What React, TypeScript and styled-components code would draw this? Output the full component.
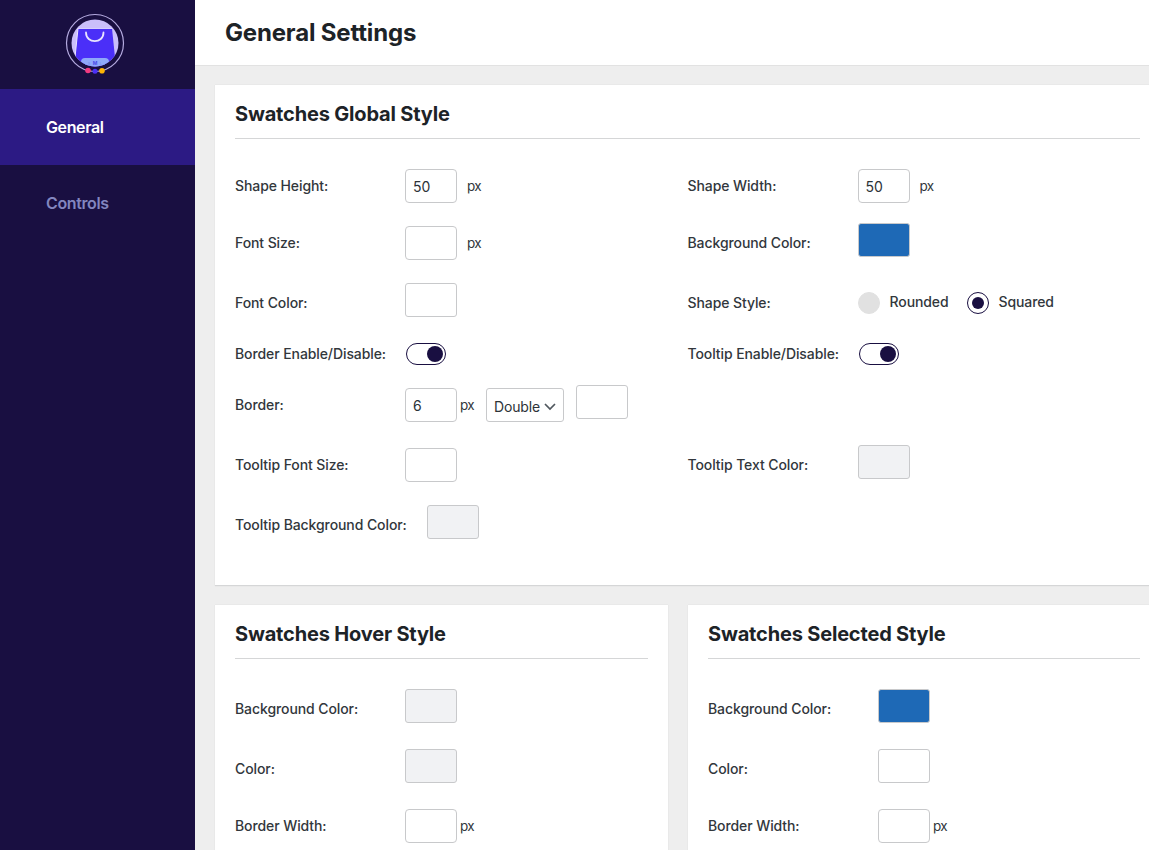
import React from "react";
import styled, { createGlobalStyle } from "styled-components";

const GlobalStyle = createGlobalStyle`
  * { box-sizing: border-box; }
  body {
    margin: 0;
    overflow: hidden;
    background: #eeeeee;
    color: #32373c;
    font-family: Inter, "Liberation Sans", sans-serif;
    font-size: 14px;
  }
`;

const Page = styled.div`
  display: flex;
  height: 850px;
  overflow: hidden;
`;

const Sidebar = styled.nav`
  flex: 0 0 195px;
  background: #190f41;
`;

const Brand = styled.div`
  height: 89px;
  padding: 12px 0 0 64px;
`;

const NavItem = styled.a<{ $active?: boolean }>`
  display: flex;
  align-items: center;
  height: 76px;
  padding-left: 46px;
  font-size: 16px;
  font-weight: 600;
  letter-spacing: -0.37px;
  color: ${(p) => (p.$active ? "#ffffff" : "#8286bf")};
  background: ${(p) => (p.$active ? "#2c1a84" : "transparent")};
`;

const Main = styled.main`
  flex: 1;
  min-width: 0;
`;

const TopBar = styled.header`
  display: flex;
  align-items: center;
  height: 66px;
  padding-left: 30px;
  background: #ffffff;
  border-bottom: 1px solid #e2e2e2;
`;

const PageTitle = styled.h1`
  margin: 0;
  font-size: 24px;
  font-weight: 700;
  letter-spacing: -0.17px;
  color: #1d2327;
`;

const Content = styled.div`
  display: flex;
  flex-direction: column;
  gap: 19px;
  width: 965px;
  padding: 19px 0 0 20px;
`;

const Card = styled.section<{ $height: number }>`
  height: ${(p) => p.$height}px;
  padding: 0 20px;
  background: #ffffff;
  box-shadow: 0 0 1px rgba(0, 0, 0, 0.12);
  border-bottom: 1px solid #d5d6d7;
`;

const CardPair = styled.div`
  display: grid;
  grid-template-columns: 453px 472px;
  column-gap: 20px;
`;

const CardTitle = styled.h2`
  display: flex;
  align-items: center;
  height: 54px;
  margin: 0;
  padding-top: 4px;
  border-bottom: 1px solid #d5d6d7;
  font-size: 20px;
  font-weight: 700;
  letter-spacing: -0.18px;
  color: #1d2327;
`;

const Fields = styled.div<{ $columns: string; $rows: string; $top: number }>`
  display: grid;
  grid-template-columns: ${(p) => p.$columns};
  grid-template-rows: ${(p) => p.$rows};
  padding-top: ${(p) => p.$top}px;
`;

const Field = styled.div<{ $column?: number }>`
  display: flex;
  align-items: center;
  height: 34px;
  grid-column: ${(p) => p.$column ?? 1};
`;

const Label = styled.label<{ $wide?: boolean }>`
  flex: 0 0 ${(p) => (p.$wide ? 192 : 170)}px;
  padding-bottom: 2px;
  font-weight: 500;
  letter-spacing: -0.09px;
  white-space: nowrap;
`;

const NumberBox = styled.input`
  width: 52px;
  height: 34px;
  padding: 1px 7px;
  border: 1px solid #c8c9cb;
  border-radius: 4px;
  background: #ffffff;
  color: #2c3338;
  font: 400 14px Inter, sans-serif;
`;

const Unit = styled.span<{ $gap: number }>`
  width: 14px;
  margin-left: ${(p) => p.$gap}px;
  padding-bottom: 1px;
  font-size: 13.5px;
  letter-spacing: -0.6px;
`;

const Swatch = styled.button<{ $color: string; $gap?: number }>`
  width: 52px;
  height: 34px;
  margin: -6px 0 0 ${(p) => p.$gap ?? 0}px;
  padding: 0;
  border: 1px solid #c8c9cb;
  border-radius: 3px;
  background: ${(p) => p.$color};
`;

const SelectBox = styled.div`
  display: flex;
  align-items: center;
  justify-content: space-between;
  width: 78px;
  height: 34px;
  margin-left: 12px;
  padding: 3px 7px 0 7px;
  border: 1px solid #c8c9cb;
  border-radius: 3px;
  color: #2c3338;
  letter-spacing: -0.15px;
`;

const Switch = styled.span`
  display: flex;
  align-items: center;
  justify-content: flex-end;
  width: 40px;
  height: 22px;
  margin-left: 1px;
  padding-right: 2px;
  border: 1px solid #190f41;
  border-radius: 11px;

  &::after {
    content: "";
    width: 16px;
    height: 16px;
    border-radius: 50%;
    background: #190f41;
  }
`;

const Radio = styled.span<{ $checked?: boolean }>`
  display: flex;
  align-items: center;
  justify-content: center;
  width: 22px;
  height: 22px;
  border: 1px solid ${(p) => (p.$checked ? "#190f41" : "#e1e1e1")};
  border-radius: 50%;
  background: ${(p) => (p.$checked ? "#ffffff" : "#e1e1e1")};

  &::after {
    content: "";
    width: 12px;
    height: 12px;
    border-radius: 50%;
    background: ${(p) => (p.$checked ? "#190f41" : "transparent")};
  }
`;

const RadioText = styled.span`
  width: 59px;
  margin: -3px 18px 0 10px;
  font-weight: 500;
  letter-spacing: -0.1px;
`;

const EMPTY = "#ffffff";
const UNSET = "#f1f2f4";
const BLUE = "#1e69b6";

function Logo() {
  return (
    <svg width="62" height="64" viewBox="0 0 62 64">
      <defs>
        <clipPath id="disc">
          <circle cx="31" cy="31" r="23.5" />
        </clipPath>
      </defs>
      <circle cx="31" cy="31" r="28.5" fill="none" stroke="#b5abe0" strokeWidth="1.2" />
      <g clipPath="url(#disc)">
        <rect x="7" y="7" width="48" height="48" fill="#cabffa" />
        <path d="M14 16.5H48L52 55H10Z" fill="#4b2ff8" />
        <path d="M14 16.5L10 55" stroke="#e9e4ff" strokeWidth="1" />
        <path d="M14 16.5H48" stroke="#e9e4ff" strokeWidth="0.8" />
        <rect x="17" y="46" width="28" height="12" rx="4" fill="#8fa8fa" />
      </g>
      <path d="M22 20.500C22 32 39.500 32 39.500 20.500" fill="none" stroke="#e9e4ff" strokeWidth="1.8" strokeLinecap="round" />
      <text x="25" y="52.500" fontSize="4" fill="#7088ea" textAnchor="middle">S</text>
      <text x="31" y="52.500" fontSize="5" fontWeight="700" fill="#4b4ce8" textAnchor="middle">M</text>
      <text x="37" y="52.500" fontSize="4" fill="#7088ea" textAnchor="middle">L</text>
      <circle cx="24" cy="58.500" r="2.800" fill="#f23a80" />
      <circle cx="31" cy="59.300" r="2.500" fill="#4b2ff8" />
      <circle cx="38" cy="58.800" r="2.800" fill="#fdb405" />
    </svg>
  );
}

function Chevron() {
  return (
    <svg width="12" height="8" viewBox="0 0 12 8">
      <path d="M1 1L6 6L11 1" fill="none" stroke="#50575e" strokeWidth="1.700" />
    </svg>
  );
}

function StateFields({ background, color }: { background: string; color: string }) {
  return (
    <Fields $columns="1fr" $rows="60px 57px 34px" $top={33}>
      <Field><Label>Background Color:</Label><Swatch $color={background} /></Field>
      <Field><Label>Color:</Label><Swatch $color={color} /></Field>
      <Field><Label>Border Width:</Label><NumberBox /><Unit $gap={3}>px</Unit></Field>
    </Fields>
  );
}

export default function App() {
  return (
    <>
      <GlobalStyle />
      <Page>
        <Sidebar>
          <Brand><Logo /></Brand>
          <NavItem $active>General</NavItem>
          <NavItem>Controls</NavItem>
        </Sidebar>
        <Main>
          <TopBar><PageTitle>General Settings</PageTitle></TopBar>
          <Content>
            <Card $height={501}>
              <CardTitle>Swatches Global Style</CardTitle>
              <Fields $columns="452.5px 1fr" $rows="57px 60px 51px 51px 60px 60px 34px" $top={30}>
                <Field><Label>Shape Height:</Label><NumberBox defaultValue="50" /><Unit $gap={10}>px</Unit></Field>
                <Field $column={2}><Label>Shape Width:</Label><NumberBox defaultValue="50" /><Unit $gap={10}>px</Unit></Field>
                <Field><Label>Font Size:</Label><NumberBox /><Unit $gap={10}>px</Unit></Field>
                <Field $column={2}><Label>Background Color:</Label><Swatch $color={BLUE} /></Field>
                <Field><Label>Font Color:</Label><Swatch $color={EMPTY} /></Field>
                <Field $column={2}>
                  <Label>Shape Style:</Label>
                  <Radio /><RadioText>Rounded</RadioText>
                  <Radio $checked /><RadioText>Squared</RadioText>
                </Field>
                <Field><Label>Border Enable/Disable:</Label><Switch /></Field>
                <Field $column={2}><Label>Tooltip Enable/Disable:</Label><Switch /></Field>
                <Field>
                  <Label>Border:</Label>
                  <NumberBox defaultValue="6" /><Unit $gap={3}>px</Unit>
                  <SelectBox>Double<Chevron /></SelectBox>
                  <Swatch $color={EMPTY} $gap={12} />
                </Field>
                <Field $column={1}><Label>Tooltip Font Size:</Label><NumberBox /></Field>
                <Field $column={2}><Label>Tooltip Text Color:</Label><Swatch $color={UNSET} /></Field>
                <Field><Label $wide>Tooltip Background Color:</Label><Swatch $color={UNSET} /></Field>
              </Fields>
            </Card>
            <CardPair>
              <Card $height={300}>
                <CardTitle>Swatches Hover Style</CardTitle>
                <StateFields background={UNSET} color={UNSET} />
              </Card>
              <Card $height={300}>
                <CardTitle>Swatches Selected Style</CardTitle>
                <StateFields background={BLUE} color={EMPTY} />
              </Card>
            </CardPair>
          </Content>
        </Main>
      </Page>
    </>
  );
}
